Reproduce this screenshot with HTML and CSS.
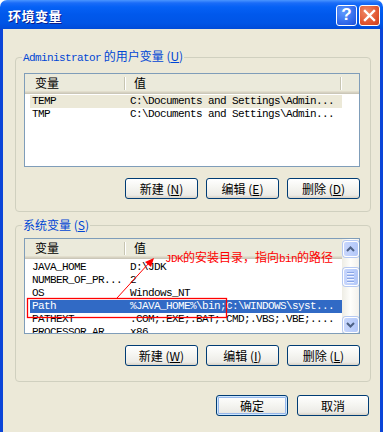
FILE: index.html
```html
<!DOCTYPE html>
<html>
<head>
    <meta charset="utf-8">
    <title>环境变量</title>
    <link rel="stylesheet" href="styles.css">
</head>
<body>
<div class="window">
    <div class="titlebar">
        <span class="title">环境变量</span>
        <span class="tbtn help">?</span>
        <span class="tbtn close">
            <svg width="13" height="13" viewBox="0 0 13 13"><path d="M2 2 L11 11 M11 2 L2 11" stroke="#fff" stroke-width="2.4" stroke-linecap="square"/></svg>
        </span>
    </div>
    <div class="body">
        <fieldset class="group g1">
            <legend><span class="m">Administrator</span> 的用户变量 (<u>U</u>)</legend>
            <div class="list l1">
                <div class="head">
                    <div class="hc c1">变量</div>
                    <div class="sep"></div>
                    <div class="hc c2">值</div>
                    <div class="sep"></div>
                </div>
                <div class="rows">
                    <div class="row inactive"><span class="n">TEMP</span><span class="v">C:\Documents and Settings\Admin...</span></div>
                    <div class="row"><span class="n">TMP</span><span class="v">C:\Documents and Settings\Admin...</span></div>
                </div>
            </div>
            <div class="btnrow">
                <button class="btn">新建 (<u>N</u>)</button>
                <button class="btn">编辑 (<u>E</u>)</button>
                <button class="btn">删除 (<u>D</u>)</button>
            </div>
        </fieldset>

        <fieldset class="group g2">
            <legend>系统变量 (<u>S</u>)</legend>
            <div class="list l2">
                <div class="lmain">
                    <div class="head">
                        <div class="hc c1">变量</div>
                        <div class="sep"></div>
                        <div class="hc c2">值</div>
                    </div>
                    <div class="rows">
                        <div class="row"><span class="n">JAVA_HOME</span><span class="v">D:\JDK</span></div>
                        <div class="row"><span class="n">NUMBER_OF_PR...</span><span class="v">2</span></div>
                        <div class="row"><span class="n">OS</span><span class="v">Windows_NT</span></div>
                        <div class="row active"><span class="n">Path</span><span class="v">%JAVA_HOME%\bin;C:\WINDOWS\syst...</span></div>
                        <div class="row"><span class="n">PATHEXT</span><span class="v">.COM;.EXE;.BAT;.CMD;.VBS;.VBE;....</span></div>
                        <div class="row"><span class="n">PROCESSOR_AR...</span><span class="v">x86</span></div>
                    </div>
                </div>
                <div class="scroll">
                    <div class="sbtn up"><svg width="9" height="6" viewBox="0 0 9 6"><path d="M1 5 L4.5 1.5 L8 5" fill="none" stroke="#4D6185" stroke-width="2"/></svg></div>
                    <div class="thumb"><i></i><i></i><i></i><i></i></div>
                    <div class="sbtn down"><svg width="9" height="6" viewBox="0 0 9 6"><path d="M1 1 L4.5 4.5 L8 1" fill="none" stroke="#4D6185" stroke-width="2"/></svg></div>
                </div>
            </div>
            <div class="btnrow">
                <button class="btn">新建 (<u>W</u>)</button>
                <button class="btn">编辑 (<u>I</u>)</button>
                <button class="btn">删除 (<u>L</u>)</button>
            </div>
        </fieldset>

        <div class="dlgrow">
            <button class="btn default">确定</button>
            <button class="btn">取消</button>
        </div>
    </div>

    <!-- red annotation drawn over the dialog -->
    <svg class="mark" width="383" height="430" viewBox="0 0 383 430">
        <rect x="27.5" y="298.5" width="199" height="19" fill="none" stroke="#f00" stroke-width="1.3"/>
        <path d="M117 298 L149 263" stroke="#f00" stroke-width="1"/>
        <polygon points="154,258 145,262 151,267" fill="#f00"/>
    </svg>
    <div class="note"><span class="m">JDK</span>的安装目录，指向<span class="m">bin</span>的路径</div>
</div>
</body>
</html>
```

FILE: styles.css
```css
html,
body {
    margin: 0;
    padding: 0;
    background: #fff;
}

body {
    font-family: "Noto Sans CJK SC", "DejaVu Sans", sans-serif;
    font-size: 12px;
    color: #000;
}

.m {
    font-family: "Liberation Mono", "DejaVu Sans Mono", monospace;
    font-size: 11px;
    letter-spacing: -0.6px;
}

.window {
    width: 383px;
    position: relative;
}

.titlebar {
    height: 29px;
    box-sizing: border-box;
    border-radius: 7px 7px 0 0;
    background: linear-gradient(#4a95ff 0, #1a6cf8 3px, #0561f5 7px, #0058ec 50%, #0055e6 80%, #004bd8 100%);
    display: flex;
    align-items: center;
    padding: 1px 3px 0 8px;
}

.title {
    flex: 1;
    color: #fff;
    font-weight: bold;
    font-size: 13px;
    text-shadow: 1px 1px #0a1e8c;
    letter-spacing: 0.5px;
}

.tbtn {
    width: 21px;
    height: 21px;
    box-sizing: border-box;
    border: 1px solid #fff;
    border-radius: 3px;
    margin-left: 2px;
    display: flex;
    align-items: center;
    justify-content: center;
}

.help {
    background: radial-gradient(circle at 35% 30%, #5f9bff, #2d64e8 70%, #1b4fd6);
    color: #fff;
    font-family: "Liberation Sans", sans-serif;
    font-weight: bold;
    font-size: 17px;
}

.close {
    background: radial-gradient(circle at 35% 30%, #f08a68, #e0532d 65%, #c8401e);
}

.body {
    height: 398px;
    background: #ece9d8;
    border: 3px solid #0b45d8;
    border-top: 0;
    padding: 20px 0 0 12px;
    display: flex;
    flex-direction: column;
}

.group {
    margin: 0;
    width: 356px;
    box-sizing: border-box;
    border: 1px solid #d0d0bf;
    border-radius: 4px;
    padding: 8px 10px 12px 8px;
}

.g2 {
    margin-top: 6px;
    padding-top: 6px;
    padding-bottom: 15px;
}

legend {
    color: #0046d5;
    padding: 0 1px;
    margin-left: -2px;
    line-height: 14px;
}

.list {
    border: 1px solid #7f9db9;
    background: #fff;
    overflow: hidden;
}

.l1 {
    height: 94px;
    box-sizing: border-box;
}

.l2 {
    height: 96px;
    box-sizing: border-box;
    display: flex;
}

.lmain {
    flex: 1;
    overflow: hidden;
}

.head {
    height: 20px;
    display: flex;
    background: linear-gradient(#ebeadb 0, #ebeadb 17px, #e2decd 17px, #e2decd 18px, #d6d2c2 18px, #d6d2c2 19px, #cbc7b8 19px);
}

.hc {
    line-height: 18px;
    box-sizing: border-box;
}

.c1 {
    width: 99px;
    padding-left: 10px;
}

.c2 {
    width: 214px;
    padding-left: 8px;
}

.sep {
    width: 2px;
    height: 13px;
    margin-top: 3px;
    background: linear-gradient(to right, #c7c5b2 1px, #fff 1px);
}

.rows {
    padding: 1px 0 0 5px;
}

.l2 .rows {
    padding-top: 2px;
}

.row {
    width: 312px;
    height: 13px;
    line-height: 13px;
    display: flex;
    white-space: nowrap;
    font-family: "Liberation Mono", "DejaVu Sans Mono", monospace;
    font-size: 11px;
    letter-spacing: -0.6px;
}

.row .n {
    width: 100px;
    padding-left: 2px;
    box-sizing: border-box;
}

.row.inactive {
    background: #ece9d8;
}

.row.active {
    background: #316ac5;
    color: #fff;
}

.scroll {
    width: 17px;
    display: flex;
    flex-direction: column;
    align-items: center;
    padding-top: 2px;
    background: linear-gradient(to right, #eeede5, #fefefb 50%, #f3f1ec);
}

.sbtn,
.thumb {
    width: 16px;
    box-sizing: border-box;
    border: 1px solid #fff;
    border-radius: 3px;
    background: linear-gradient(to right, #c8d6fb, #bdd0fc 50%, #b3c7f7);
    box-shadow: 0 0 0 1px #b6c9f2;
    display: flex;
    align-items: center;
    justify-content: center;
}

.sbtn {
    height: 16px;
}

.thumb {
    height: 18px;
    margin-top: 11px;
    flex-direction: column;
    gap: 1px;
}

.thumb i {
    display: block;
    width: 7px;
    height: 1px;
    background: #8aa6e6;
    border-bottom: 1px solid #eef3ff;
}

.down {
    margin-top: auto;
}

.btnrow {
    display: flex;
    justify-content: flex-end;
    gap: 8px;
    margin-top: 11px;
}

.btn {
    width: 73px;
    height: 21px;
    padding: 0;
    border: 1px solid #003c74;
    border-radius: 3px;
    background: linear-gradient(#ffffff, #f5f5f1 45%, #ecebe6 85%, #d8d2c6);
    font-family: "Noto Sans CJK SC", sans-serif;
    font-size: 12px;
    line-height: 17px;
    color: #000;
}

.btn u {
    text-underline-offset: 1px;
}

.default {
    box-shadow: inset 0 0 0 1px #cee7ff, inset 0 0 0 2px #98b8ea;
}

.dlgrow {
    display: flex;
    justify-content: flex-end;
    gap: 9px;
    margin-top: 13px;
    padding-right: 11px;
}

.dlgrow .btn {
    width: 72px;
}

.mark {
    position: absolute;
    left: 0;
    top: 0;
    pointer-events: none;
}

.note {
    position: absolute;
    left: 165px;
    top: 250px;
    color: #f00;
    line-height: 14px;
    white-space: nowrap;
}
```
